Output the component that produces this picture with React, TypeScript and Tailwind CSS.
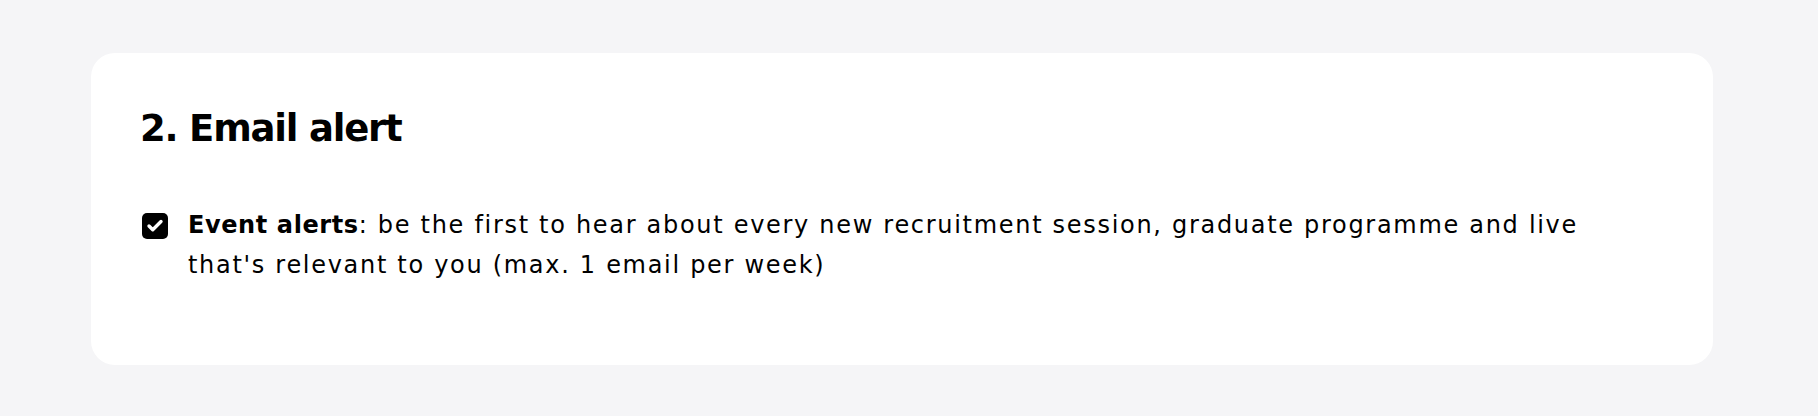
import { Check } from "lucide-react";

export default function App() {
  return (
    <div className="min-h-[416px] bg-[#f5f5f7] pl-[91px] pr-[105px] pt-[53px] pb-[51px] font-['DejaVu_Sans',sans-serif] text-black">
      <section className="rounded-[24px] bg-white h-[312px] px-[49px] pt-[52px]">
        {/* Section title */}
        <h2 className="text-[37px] leading-[48px] font-bold tracking-[-1.2px]">
          2. Email alert
        </h2>

        {/* Alert option */}
        <label className="mt-[52px] flex items-start gap-[20px]">
          <span className="mt-[8px] ml-[2px] flex h-[26px] w-[26px] shrink-0 items-center justify-center rounded-[5px] bg-black">
            <Check className="h-[18px] w-[18px] text-white" strokeWidth={4.5} />
          </span>
          <p className="text-[24px] leading-[40px] tracking-[1.7px]">
            <span className="font-bold tracking-[0.6px]">Event alerts</span>: be the first to hear about every new recruitment
            session, graduate programme and live
            <br />
            that's relevant to you (max. 1 email per week)
          </p>
        </label>
      </section>
    </div>
  );
}
